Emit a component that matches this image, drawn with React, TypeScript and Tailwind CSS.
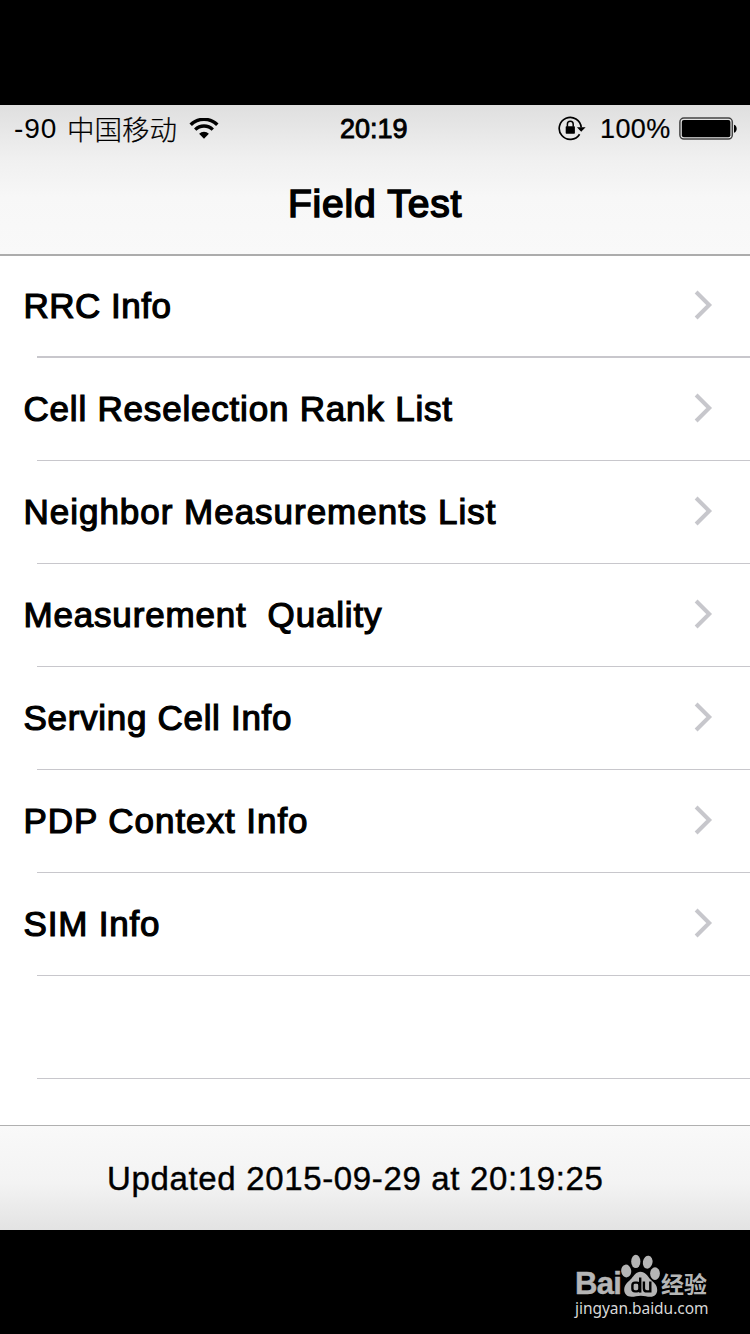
import React from "react";

type Row = { label: string; tracking: string; height: string; pad: string; border: string };

const rows: Row[] = [
  { label: "RRC Info", tracking: "tracking-[0.5px]", height: "h-[102px]", pad: "pt-0", border: "h-[2px]" },
  { label: "Cell Reselection Rank List", tracking: "tracking-[0.8px]", height: "h-[103px]", pad: "pt-px", border: "h-px" },
  { label: "Neighbor Measurements List", tracking: "tracking-[0.98px]", height: "h-[103px]", pad: "pt-px", border: "h-px" },
  { label: "Measurement  Quality", tracking: "tracking-[0.82px]", height: "h-[103px]", pad: "pt-px", border: "h-px" },
  { label: "Serving Cell Info", tracking: "tracking-[0.7px]", height: "h-[103px]", pad: "pt-px", border: "h-px" },
  { label: "PDP Context Info", tracking: "tracking-[0.95px]", height: "h-[103px]", pad: "pt-px", border: "h-px" },
  { label: "SIM Info", tracking: "tracking-[0.8px]", height: "h-[103px]", pad: "pt-px", border: "h-px" },
  { label: "", tracking: "", height: "h-[103px]", pad: "pt-px", border: "h-px" },
];

function Chevron() {
  return (
    <svg className="mt-[33px] mr-[36px] h-[32px] w-[22px] shrink-0" viewBox="0 0 22 32" fill="none">
      <path d="M4.1 3L17.2 16L4.1 29" stroke="#c7c7cc" strokeWidth="4" />
    </svg>
  );
}

function WifiIcon() {
  return (
    <svg className="h-[22px] w-[30px]" viewBox="0 0 30 22" fill="none" stroke="#000">
      <path d="M1.7 6.8A19 19 0 0 1 28.3 6.8" strokeWidth="3.5" />
      <path d="M6.2 11.6A12.5 12.5 0 0 1 23.8 11.6" strokeWidth="3.3" />
      <path d="M10.1 15.8A7 7 0 0 1 19.9 15.8L15 20.8Z" fill="#000" stroke="none" />
    </svg>
  );
}

function RotationLockIcon() {
  return (
    <svg className="h-[26px] w-[28px]" viewBox="0 0 28 26" fill="none" stroke="#000">
      <path d="M21.6 18.2A11 11 0 1 1 23.2 11.5" strokeWidth="1.7" />
      <path d="M18.9 11.2H27.6L23.2 15.8Z" fill="#000" stroke="none" />
      <rect x="7.7" y="10.2" width="9.2" height="7.6" rx="0.7" fill="#000" stroke="none" />
      <path d="M9.4 10.7V8.1A2.9 2.9 0 0 1 15.2 8.1V10.7" strokeWidth="1.5" />
    </svg>
  );
}

function BatteryIcon() {
  return (
    <svg className="h-[24px] w-[60px]" viewBox="0 0 60 24" fill="none">
      <rect x="0.9" y="1.1" width="52.4" height="21" rx="4" stroke="#444" strokeWidth="1.5" />
      <rect x="2.8" y="3" width="48.6" height="17.2" rx="2" fill="#000" />
      <path d="M55 7.7C58.6 8.5 58.6 14.9 55 15.7Z" fill="#000" />
    </svg>
  );
}

function Paw() {
  return (
    <svg className="h-[44px] w-[41px]" viewBox="0 0 41 44" fill="#b5b5b5">
      <ellipse cx="5.2" cy="17" rx="5" ry="6.4" transform="rotate(-8 5.2 17)" />
      <ellipse cx="14.8" cy="7.4" rx="4.6" ry="6.7" />
      <ellipse cx="26.7" cy="8.2" rx="4.8" ry="6.5" transform="rotate(10 26.7 8.2)" />
      <ellipse cx="34" cy="19.6" rx="4.9" ry="6.3" />
      <path d="M19.3 17.8C24.3 17.8 26.5 22 29 25C32 28 36.2 30 36.2 36C36.2 40 33.5 42.8 29.5 42.8C26 42.8 23.5 41.7 19.8 41.7C16 41.7 14 42.8 10.5 42.8C6 42.8 3.2 40 3.2 35.8C3.2 30 8 27.5 10.5 24.5C13 21.5 15.3 17.8 19.3 17.8Z" />
      <g fill="none" stroke="#000" strokeWidth="2.4">
        <rect x="11.4" y="28.6" width="7" height="8.8" rx="2.6" />
        <path d="M19.2 23.5V38.6" />
        <path d="M22.9 27.4V34.4Q22.9 37.4 25.9 37.4H29.3V27.4" />
      </g>
    </svg>
  );
}

function Watermark() {
  return (
    <div className="flex h-[104px] flex-col bg-black pt-[23px] pl-[575px] text-[#b5b5b5]">
      <div className="flex h-[45px] items-end whitespace-nowrap">
        <span className="w-[46px] font-['Liberation_Sans'] text-[31px] leading-[29px] font-bold tracking-[-0.7px] [-webkit-text-stroke:0.5px_#b5b5b5]">
          Bai
        </span>
        <Paw />
        <span className="-ml-px font-['Noto_Sans_CJK_SC',sans-serif] text-[23px] leading-[29px] font-bold">经验</span>
      </div>
      <span className="font-['Noto_Sans',sans-serif] text-[15.5px] leading-[20px] tracking-[-0.05px] text-[#d8d8d8]">
        jingyan.baidu.com
      </span>
    </div>
  );
}

export default function App() {
  return (
    <main className="flex h-[1334px] w-[750px] flex-col overflow-hidden bg-black pt-[105px] font-['Liberation_Sans',Arial,sans-serif] text-black">
      <header className="flex h-[151px] flex-col border-b-2 border-[#acacac] bg-[linear-gradient(to_bottom,#dfdfdf_0%,#f0f0f0_36%,#f7f7f7_62%,#f9f9f9_100%)]">
        <div className="flex h-[48px] items-center whitespace-nowrap text-[27px] leading-[48px]">
          <div className="flex w-[340px] items-center pl-[14px]">
            <span className="w-[53px] text-[28px] tracking-[0.9px]">-90</span>
            <span className="mb-[3px] w-[122px] font-['Noto_Sans_CJK_SC',sans-serif] text-[27.5px] leading-[40px] font-light [-webkit-text-stroke:0.2px_black]">
              中国移动
            </span>
            <WifiIcon />
          </div>
          <span className="w-[218px] [-webkit-text-stroke:0.9px_black]">20:19</span>
          <RotationLockIcon />
          <span className="ml-[14px] w-[79px] tracking-[0.4px] [-webkit-text-stroke:0.2px_black]">100%</span>
          <BatteryIcon />
        </div>
        <h1 className="pt-[29px] text-center text-[39px] leading-[44px] tracking-[0.8px] [-webkit-text-stroke:1.6px_black]">
          Field Test
        </h1>
      </header>
      <section className="flex h-[869px] flex-col bg-white">
        {rows.map((row, index) => (
          <div key={index} className={`flex flex-col justify-between ${row.height} ${row.pad}`}>
            <div className="flex h-[100px] justify-between pl-[23.5px]">
              <span
                className={`pt-[30px] text-[35px] leading-[40px] whitespace-pre [-webkit-text-stroke:1.2px_black] ${row.tracking}`}
              >
                {row.label}
              </span>
              {row.label && <Chevron />}
            </div>
            <div className={`ml-[37px] bg-[#c8c7cc] ${row.border}`} />
          </div>
        ))}
      </section>
      <footer className="h-[105px] border-t border-[#b0b0b0] bg-linear-to-b from-[#f9f9f9] via-[#f3f3f3] via-55% to-[#e3e3e3] pt-[33px] pl-[107px]">
        <p className="text-[33px] leading-[40px] tracking-[0.65px] whitespace-nowrap [-webkit-text-stroke:0.4px_black]">
          Updated 2015-09-29 at 20:19:25
        </p>
      </footer>
      <Watermark />
    </main>
  );
}
